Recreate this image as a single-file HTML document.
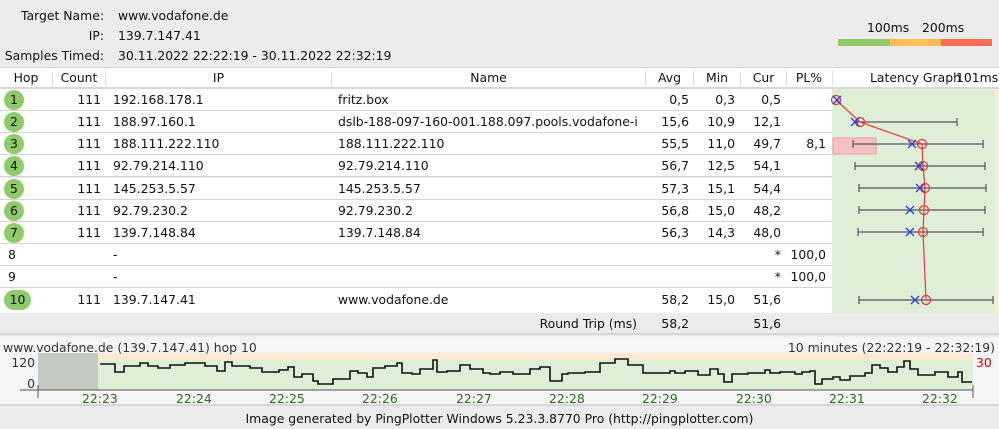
<!DOCTYPE html>
<html><head><meta charset="utf-8"><style>
*{margin:0;padding:0;box-sizing:border-box}
body{width:999px;height:429px;overflow:hidden;background:#ececec;font-family:"DejaVu Sans","Liberation Sans",sans-serif;font-size:12.4px;color:#111;position:relative}
.a{position:absolute;white-space:nowrap}
.r{text-align:right}
.c{text-align:center}
.row{position:absolute;left:0;width:999px;height:22px;background:#fff;border-bottom:1px solid #d4d4d4}
.row span{position:absolute;line-height:22px;top:0}
.hop{display:inline-block;background:#8fcb6b;border-radius:11px;height:20px;top:1px!important;line-height:20px!important;text-align:center}
</style></head><body>
<div class="a r" style="left:0;width:104px;top:8px">Target Name:</div>
<div class="a" style="left:118px;top:8px">www.vodafone.de</div>
<div class="a r" style="left:0;width:104px;top:28px">IP:</div>
<div class="a" style="left:118px;top:28px">139.7.147.41</div>
<div class="a r" style="left:0;width:104px;top:48px">Samples Timed:</div>
<div class="a" style="left:118px;top:48px">30.11.2022 22:22:19 - 30.11.2022 22:32:19</div>
<div class="a" style="left:867px;top:20px">100ms</div>
<div class="a" style="left:922px;top:20px">200ms</div>
<div class="a" style="left:838px;top:39px;width:52px;height:7px;background:#93c86b"></div>
<div class="a" style="left:890px;top:39px;width:51px;height:7px;background:#fdbf55"></div>
<div class="a" style="left:941px;top:39px;width:51px;height:7px;background:#fb6a52"></div>

<div class="a" style="left:0;top:67px;width:999px;height:22px;background:#fff;border-top:1px solid #d0d0d0;border-bottom:2px solid #d8d8d8"></div>
<div class="a" style="top:68px;left:0;width:999px;height:20px;line-height:20px">
<span class="a c" style="left:0;width:52px">Hop</span>
<span class="a" style="left:52px;top:3px;height:15px;border-left:1px solid #ddd"></span>
<span class="a c" style="left:53px;width:52px">Count</span>
<span class="a" style="left:105px;top:3px;height:15px;border-left:1px solid #ddd"></span>
<span class="a c" style="left:106px;width:225px">IP</span>
<span class="a" style="left:331px;top:3px;height:15px;border-left:1px solid #ddd"></span>
<span class="a c" style="left:332px;width:313px">Name</span>
<span class="a" style="left:645px;top:3px;height:15px;border-left:1px solid #ddd"></span>
<span class="a c" style="left:646px;width:47px">Avg</span>
<span class="a" style="left:693px;top:3px;height:15px;border-left:1px solid #ddd"></span>
<span class="a c" style="left:694px;width:46px">Min</span>
<span class="a" style="left:740px;top:3px;height:15px;border-left:1px solid #ddd"></span>
<span class="a c" style="left:741px;width:45px">Cur</span>
<span class="a" style="left:786px;top:3px;height:15px;border-left:1px solid #ddd"></span>
<span class="a c" style="left:787px;width:44px">PL%</span>
<span class="a" style="left:832px;top:3px;height:15px;border-left:1px solid #ddd"></span>
<span class="a" style="left:870px">Latency Graph</span>
<span class="a" style="left:956px">101ms</span>
</div>

<div class="row" style="top:89px"><span class="hop" style="left:4px;width:20px">1</span><span class="r" style="left:52px;width:49px">111</span><span style="left:113px">192.168.178.1</span><span style="left:338px">fritz.box</span><span class="r" style="left:645px;width:44px">0,5</span><span class="r" style="left:693px;width:42px">0,3</span><span class="r" style="left:740px;width:41px">0,5</span></div>
<div class="row" style="top:111px"><span class="hop" style="left:4px;width:20px">2</span><span class="r" style="left:52px;width:49px">111</span><span style="left:113px">188.97.160.1</span><span style="left:338px">dslb-188-097-160-001.188.097.pools.vodafone-i</span><span class="r" style="left:645px;width:44px">15,6</span><span class="r" style="left:693px;width:42px">10,9</span><span class="r" style="left:740px;width:41px">12,1</span></div>
<div class="row" style="top:133px"><span class="hop" style="left:4px;width:20px">3</span><span class="r" style="left:52px;width:49px">111</span><span style="left:113px">188.111.222.110</span><span style="left:338px">188.111.222.110</span><span class="r" style="left:645px;width:44px">55,5</span><span class="r" style="left:693px;width:42px">11,0</span><span class="r" style="left:740px;width:41px">49,7</span><span class="r" style="left:786px;width:40px">8,1</span></div>
<div class="row" style="top:155px"><span class="hop" style="left:4px;width:20px">4</span><span class="r" style="left:52px;width:49px">111</span><span style="left:113px">92.79.214.110</span><span style="left:338px">92.79.214.110</span><span class="r" style="left:645px;width:44px">56,7</span><span class="r" style="left:693px;width:42px">12,5</span><span class="r" style="left:740px;width:41px">54,1</span></div>
<div class="row" style="top:178px"><span class="hop" style="left:4px;width:20px">5</span><span class="r" style="left:52px;width:49px">111</span><span style="left:113px">145.253.5.57</span><span style="left:338px">145.253.5.57</span><span class="r" style="left:645px;width:44px">57,3</span><span class="r" style="left:693px;width:42px">15,1</span><span class="r" style="left:740px;width:41px">54,4</span></div>
<div class="row" style="top:200px"><span class="hop" style="left:4px;width:20px">6</span><span class="r" style="left:52px;width:49px">111</span><span style="left:113px">92.79.230.2</span><span style="left:338px">92.79.230.2</span><span class="r" style="left:645px;width:44px">56,8</span><span class="r" style="left:693px;width:42px">15,0</span><span class="r" style="left:740px;width:41px">48,2</span></div>
<div class="row" style="top:222px"><span class="hop" style="left:4px;width:20px">7</span><span class="r" style="left:52px;width:49px">111</span><span style="left:113px">139.7.148.84</span><span style="left:338px">139.7.148.84</span><span class="r" style="left:645px;width:44px">56,3</span><span class="r" style="left:693px;width:42px">14,3</span><span class="r" style="left:740px;width:41px">48,0</span></div>
<div class="row" style="top:244px"><span style="left:8px">8</span><span style="left:113px">-</span><span class="r" style="left:740px;width:41px">*</span><span class="r" style="left:786px;width:40px">100,0</span></div>
<div class="row" style="top:266px"><span style="left:8px">9</span><span style="left:113px">-</span><span class="r" style="left:740px;width:41px">*</span><span class="r" style="left:786px;width:40px">100,0</span></div>
<div class="row" style="top:288px;border-bottom:none;height:25px"><span class="hop" style="left:4px;width:27px;top:2px!important">10</span><span class="r" style="left:52px;width:49px;top:1px">111</span><span style="left:113px;top:1px">139.7.147.41</span><span style="left:338px;top:1px">www.vodafone.de</span><span class="r" style="left:645px;width:44px;top:1px">58,2</span><span class="r" style="left:693px;width:42px;top:1px">15,0</span><span class="r" style="left:740px;width:41px;top:1px">51,6</span></div>

<div class="a" style="left:0;top:313px;width:999px;height:22px;line-height:22px;border-bottom:2px solid #d6d6d6">
<span class="a r" style="left:400px;width:237px">Round Trip (ms)</span>
<span class="a r" style="left:645px;width:44px">58,2</span>
<span class="a r" style="left:740px;width:41px">51,6</span></div>

<svg class="a" style="left:0;top:0" width="999" height="429">
<rect x="832" y="89" width="163" height="224" fill="#dfeed6"/>
<rect x="995" y="89" width="4" height="224" fill="#fdebd0"/>
<rect x="833" y="138" width="43" height="16" fill="#f8c1c1" stroke="#eaa0a0"/>
<g stroke="#555" stroke-width="1.2" fill="none">
<path d="M857 122H957M857 118v8M957 118v8"/>
<path d="M853 144H983M853 140v8M983 140v8"/>
<path d="M855 166H985M855 162v8M985 162v8"/>
<path d="M859 188H986M859 184v8M986 184v8"/>
<path d="M859 210H985M859 206v8M985 206v8"/>
<path d="M858 232H983M858 228v8M983 228v8"/>
<path d="M859 300H993M859 296v8M993 296v8"/>
</g>
<path d="M836 100L860 122L922 144L923 166L925 188L924 210L923 232L926 300" stroke="#e8393a" stroke-width="1.2" fill="none"/>
<g stroke="#e8393a" stroke-width="1.3" fill="none">
<circle cx="836" cy="100" r="4.5"/><circle cx="860" cy="122" r="4.5"/><circle cx="922" cy="144" r="4.5"/><circle cx="923" cy="166" r="4.5"/><circle cx="925" cy="188" r="4.5"/><circle cx="924" cy="210" r="4.5"/><circle cx="923" cy="232" r="4.5"/><circle cx="926" cy="300" r="4.5"/>
</g>
<g stroke="#2a3fe0" stroke-width="1.3">
<path d="M833 96l8 8M841 96l-8 8"/><path d="M851 118l8 8M859 118l-8 8"/><path d="M908 140l8 8M916 140l-8 8"/><path d="M915 162l8 8M923 162l-8 8"/><path d="M916 184l8 8M924 184l-8 8"/><path d="M906 206l8 8M914 206l-8 8"/><path d="M906 228l8 8M914 228l-8 8"/><path d="M911 296l8 8M919 296l-8 8"/>
</g>
<rect x="0" y="337" width="999" height="68" fill="#f5f5f5"/>
<rect x="38" y="353" width="935" height="7" fill="#fde9cf"/>
<rect x="38" y="360" width="935" height="30" fill="#dfeed6"/>
<rect x="38" y="353" width="60" height="37" fill="#c5c9c0"/>
<path d="M20 390H973M38 385v13M973 385v13" stroke="#555" stroke-width="1" fill="none"/>
<polyline fill="none" stroke="#111" stroke-width="1.6" points="100,364 115,364 115,372 124,372 124,366 140,366 140,363 148,363 148,366 158,366 158,368 170,368 170,365 185,365 185,363 205,363 205,366 217,366 217,371 225,371 225,362 232,362 232,366 250,366 250,368 262,368 262,372 279,372 279,370 288,370 288,367 294,367 294,377 302,377 302,374 313,374 313,381 318,381 318,384 333,384 333,379 350,379 350,371 358,371 358,373 367,373 367,377 373,377 373,368 385,368 385,366 397,366 397,363 402,363 402,373 412,373 412,374 420,374 420,369 433,369 433,360 437,360 437,372 447,372 447,371 460,371 460,365 470,365 470,369 483,369 483,373 490,373 490,374 500,374 500,372 513,372 513,374 530,374 530,369 540,369 540,367 550,367 550,381 562,381 562,374 568,374 568,373 585,373 585,372 600,372 600,363 615,363 615,359 628,359 628,365 643,365 643,373 670,373 670,371 675,371 675,373 685,373 685,371 698,371 698,375 710,375 710,369 718,369 718,374 724,374 724,382 732,382 732,374 748,374 748,373 765,373 765,370 770,370 770,373 780,373 780,372 795,372 795,374 802,374 802,372 810,372 810,371 815,371 815,384 822,384 822,379 833,379 833,377 840,377 840,380 850,380 850,376 865,376 865,373 872,373 872,365 880,365 880,368 888,368 888,372 897,372 897,367 904,367 904,361 910,361 910,369 918,369 918,375 935,375 935,372 948,372 948,377 958,377 958,372 962,372 962,382 972,382"/>
<path d="M0 405H999" stroke="#d6d6d6" stroke-width="2"/>
</svg>
<div class="a" style="left:3px;top:340px;color:#333">www.vodafone.de (139.7.147.41) hop 10</div>
<div class="a r" style="right:4px;top:340px;color:#333">10 minutes (22:22:19 - 22:32:19)</div>
<div class="a r" style="left:0;width:35px;top:355px;color:#333">120</div>
<div class="a r" style="left:0;width:35px;top:376px;color:#333">0</div>
<div class="a" style="left:976px;top:355px;color:#c00">30</div>
<div class="a" style="top:391px;left:0;width:999px;color:#2d6a1f">
<span class="a" style="left:82px">22:23</span><span class="a" style="left:176px">22:24</span><span class="a" style="left:269px">22:25</span><span class="a" style="left:362px">22:26</span><span class="a" style="left:456px">22:27</span><span class="a" style="left:549px">22:28</span><span class="a" style="left:642px">22:29</span><span class="a" style="left:736px">22:30</span><span class="a" style="left:829px">22:31</span><span class="a" style="left:922px">22:32</span></div>
<div class="a c" style="left:0;width:999px;top:411px">Image generated by PingPlotter Windows 5.23.3.8770 Pro (http://pingplotter.com)</div>
</body></html>
